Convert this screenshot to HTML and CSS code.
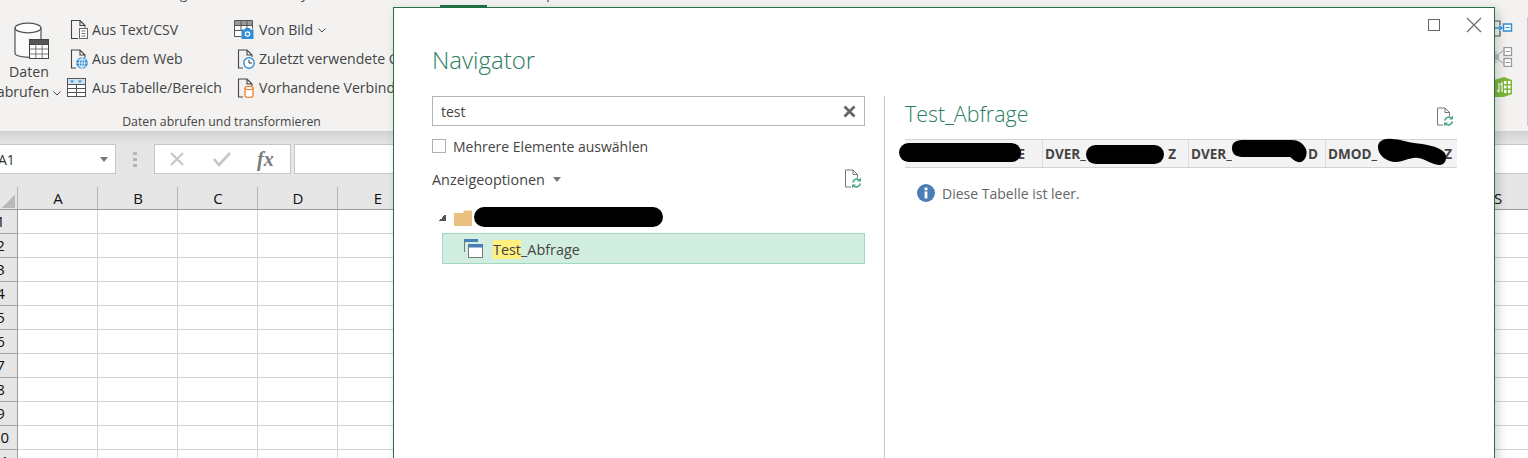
FILE: index.html
```html
<!DOCTYPE html>
<html lang="de">
<head>
<meta charset="utf-8">
<title>Navigator</title>
<link rel="stylesheet" href="styles.css">
</head>
<body>
<div class="app">
  <nav class="tabs">
    <span class="tab t-einf">Einfügen</span>
    <span class="tab t-seit">Seitenlayout</span>
    <span class="tab t-daten"></span>
    <span class="tab t-ueber">Überprüfen</span>
  </nav>
  <section class="ribbon">
    <div class="group">
      <div class="group-body">
        <div class="big-btn">
          <svg class="big-icon" width="36" height="38" viewBox="0 0 36 38"><path d="M1 6v25c0 3 6 4.500 14 4.500V17h12V6z" fill="#fbfbfb"/><ellipse cx="14" cy="6" rx="13" ry="4.800" fill="#fff" stroke="#555" stroke-width="1.200"/><path d="M1 6v25c0 2.300 4.500 3.900 14 4.300M27 6v11" fill="none" stroke="#555" stroke-width="1.200"/><rect x="15.500" y="17.500" width="19" height="19" fill="#fff" stroke="#444"/><rect x="15.500" y="17.500" width="19" height="5" fill="#555" stroke="#444"/><path d="M21.800 22v14M28.200 22v14M16 27h18M16 32h18" stroke="#777"/></svg>
          <span class="big-l1">Daten</span>
          <span class="big-l2">abrufen <svg class="chev" width="8" height="5" viewBox="0 0 8 5"><path d="M.5.500 4 4 7.500.500" fill="none" stroke="#444"/></svg></span>
        </div>
        <ul class="cmds cmds-a">
          <li><svg class="ico" width="20" height="20" viewBox="0 0 20 20"><path d="M9 18.500H2.500V.500H11l5 5v2M11 .500v5h5" fill="none" stroke="#444" stroke-width="1.100"/><rect x="10.500" y="8.500" width="8" height="10" fill="#fff" stroke="#666"/><path d="M12.500 11h4M12.500 13.500h4M12.500 16h4" stroke="#777"/></svg>Aus Text/CSV</li>
          <li><svg class="ico" width="20" height="20" viewBox="0 0 20 20"><path d="M7 19H2.500V1H11l5 5v2.500M11 1v5h5" fill="none" stroke="#444" stroke-width="1.100"/><circle cx="13" cy="14" r="5.800" fill="#2e8fd6"/><path d="M7.500 14h11M13 8.500v11M9 10.800h8M9 17.200h8M13 8.500c-3.500 3-3.500 8 0 11M13 8.500c3.500 3 3.500 8 0 11" fill="none" stroke="#fff" stroke-width=".8"/></svg>Aus dem Web</li>
          <li><svg class="ico ico-table" width="20" height="20" viewBox="0 0 20 20"><rect x=".500" y=".500" width="18" height="18" fill="#fff" stroke="#555"/><rect x="1" y="1" width="17" height="5" fill="#cfe3f2"/><path d="M3 2.500h4L5 5zM11 2.500h4L13 5z" fill="#2e8fd6"/><path d="M1 6.500h17M1 10.500h17M1 14.500h17M9.500 6.500v12" stroke="#555"/></svg>Aus Tabelle/Bereich</li>
        </ul>
        <ul class="cmds cmds-b">
          <li><svg class="ico ico-table" width="20" height="20" viewBox="0 0 20 20"><path d="M7.500 16.500H.5V.500h18v8" fill="#fff" stroke="#555"/><rect x="1" y="1" width="17" height="4" fill="#999"/><path d="M1 5.500h17M1 10.500h8M7 1v10M13 1v7" stroke="#555"/><rect x="7.500" y="9.500" width="12" height="9.500" fill="#2e8fd6"/><rect x="11" y="8" width="5" height="2" fill="#2e8fd6"/><circle cx="13.500" cy="14" r="2.800" fill="#fff"/><circle cx="13.500" cy="14" r="1.500" fill="#2e8fd6"/></svg>Von Bild <svg class="chev" width="8" height="5" viewBox="0 0 8 5"><path d="M.5.500 4 4 7.500.500" fill="none" stroke="#444"/></svg></li>
          <li><svg class="ico" width="20" height="20" viewBox="0 0 20 20"><path d="M7 19H2.500V1H11l5 5v2M11 1v5h5" fill="none" stroke="#444" stroke-width="1.100"/><circle cx="13" cy="14" r="5.200" fill="#fff" stroke="#2e8fd6" stroke-width="1.400"/><path d="M13 10.800V14h3" fill="none" stroke="#333"/></svg>Zuletzt verwendete Quellen</li>
          <li><svg class="ico" width="20" height="20" viewBox="0 0 20 20"><path d="M7 19H2.500V1H11l5 5v2M11 1v5h5" fill="none" stroke="#444" stroke-width="1.100"/><path d="M9 10v8c0 .800 2 1.300 4 1.300s4-.500 4-1.300v-8" fill="#fff" stroke="#e8802c" stroke-width="1.300"/><ellipse cx="13" cy="10" rx="4" ry="1.600" fill="#fff" stroke="#e8802c" stroke-width="1.300"/></svg>Vorhandene Verbindungen</li>
        </ul>
      </div>
      <div class="group-label">Daten abrufen und transformieren</div>
    </div>
    <div class="ribbon-right">
      <svg class="rel" width="20" height="17" viewBox="0 0 20 17"><path d="M0 1h7v4M7 11v5H0" fill="none" stroke="#555" stroke-width="1.200"/><path d="M0 8h8" stroke="#2e8fd6" stroke-width="1.400"/><path d="M6 5.500 9 8l-3 2.500" fill="none" stroke="#2e8fd6" stroke-width="1.200"/><rect x="10.500" y="4" width="8" height="7" fill="#fff" stroke="#2e8fd6" stroke-width="1.500"/><path d="M12.500 7.500h4" stroke="#2e8fd6"/></svg>
      <svg class="rel" width="20" height="20" viewBox="0 0 20 20"><path d="M0 5h4M0 15h4M4 8l6-4M4 12l6 4" stroke="#aaa" fill="none"/><rect x="0" y="7" width="6" height="6" fill="#bbb"/><rect x="11" y=".500" width="7.500" height="8" fill="#fff" stroke="#999" stroke-width="1.300"/><rect x="11" y="11.500" width="7.500" height="8" fill="#fff" stroke="#999" stroke-width="1.300"/><path d="M12.500 4.500h4.500M12.500 15.500h4.500" stroke="#999"/></svg>
      <svg class="rel" width="20" height="20" viewBox="0 0 20 20"><path d="M1 3l10-3 8 3v14l-8 3H1z" fill="#7cb83c"/><path d="M11 4h2.500v3H11zM15 4h2.500v3H15zM11 8.500h2.500v3H11zM15 8.500h2.500v3H15zM11 13h2.500v3H11zM15 13h2.500v3H15z" fill="#fff"/><path d="M6 6v9M4 13l2 2.500M7.500 8 9 6v9" stroke="#fff" fill="none" stroke-width="1.200"/></svg>
    </div>
    <div class="ribbon-end"></div>
  </section>
  <section class="formula-bar">
    <div class="name-box"><span>A1</span><i class="caret"></i></div>
    <div class="grip"><i></i><i></i><i></i></div>
    <div class="fx-box">
      <svg width="16" height="16" viewBox="0 0 16 16"><path d="M2 2l12 12M14 2 2 14" stroke="#c6c6c6" stroke-width="2"/></svg>
      <svg width="18" height="16" viewBox="0 0 18 16"><path d="M1 8l5 6L17 2" fill="none" stroke="#c6c6c6" stroke-width="2.600"/></svg>
      <span class="fx">fx</span>
    </div>
    <div class="formula-input"></div>
  </section>
  <section class="sheet">
    <div class="col-heads">
      <div class="corner"><i></i></div>
      <span>A</span><span>B</span><span>C</span><span>D</span><span>E</span><span></span><span></span><span></span><span></span><span></span><span></span><span></span><span></span><span></span><span></span><span></span><span></span><span></span><span>S</span>
    </div>
    <div class="row"><div class="row-head"><span>1</span></div><div class="cells"></div></div>
    <div class="row"><div class="row-head"><span>2</span></div><div class="cells"></div></div>
    <div class="row"><div class="row-head"><span>3</span></div><div class="cells"></div></div>
    <div class="row"><div class="row-head"><span>4</span></div><div class="cells"></div></div>
    <div class="row"><div class="row-head"><span>5</span></div><div class="cells"></div></div>
    <div class="row"><div class="row-head"><span>6</span></div><div class="cells"></div></div>
    <div class="row"><div class="row-head"><span>7</span></div><div class="cells"></div></div>
    <div class="row"><div class="row-head"><span>8</span></div><div class="cells"></div></div>
    <div class="row"><div class="row-head"><span>9</span></div><div class="cells"></div></div>
    <div class="row"><div class="row-head"><span>10</span></div><div class="cells"></div></div>
    <div class="row"><div class="row-head"><span>11</span></div><div class="cells"></div></div>
  </section>
</div>

<div class="dialog">
  <div class="win-btns">
    <svg width="14" height="14" viewBox="0 0 14 14"><rect x="1.500" y="1.500" width="11" height="11" fill="none" stroke="#666"/></svg>
    <svg width="16" height="16" viewBox="0 0 16 16"><path d="M1 1l14 14M15 1 1 15" stroke="#666" stroke-width="1.100"/></svg>
  </div>
  <h1 class="dlg-title">Navigator</h1>
  <div class="panes">
    <div class="pane-left">
      <div class="search"><span>test</span><svg width="13" height="13" viewBox="0 0 13 13"><path d="M1.500 1.500l10 10M11.500 1.500l-10 10" stroke="#666" stroke-width="2.800"/></svg></div>
      <label class="check-row"><i class="check"></i>Mehrere Elemente auswählen</label>
      <div class="options-row">
        <span class="options">Anzeigeoptionen<i class="caret caret-opt"></i></span>
        <svg class="refresh" width="18" height="20" viewBox="0 0 18 20"><path d="M7 18H1.500V1H9l4.500 4.500V9M9 1v4.500h4.500" fill="none" stroke="#777"/><path d="M8.800 13.500a4 4 0 0 1 7-2M16.300 14.500a4 4 0 0 1-7 2" fill="none" stroke="#4fa886" stroke-width="1.700"/><path d="M17 8.500v4h-4zM8 19.500v-4h4z" fill="#4fa886"/></svg>
      </div>
      <div class="tree-folder">
        <i class="tri"></i>
        <svg width="18" height="17" viewBox="0 0 18 17"><path d="M0 4h9l1-2 0 0V1h7l1 1v15H0z" fill="#e9c07f"/><path d="M10 3.500V1.500h7" fill="none" stroke="#f5e3c4"/></svg>
        <span class="redact"></span>
      </div>
      <div class="tree-item">
        <svg width="19" height="19" viewBox="0 0 19 19"><path d="M.5 13V.5h13" fill="none" stroke="#777"/><rect y="0" width="14" height="3" fill="#4a7fb5"/><rect x="4.500" y="5.500" width="14" height="13" fill="#fff" stroke="#777"/><rect x="4" y="5" width="15" height="3.500" fill="#4a7fb5"/></svg>
        <span class="item-text"><mark>Test</mark>_Abfrage</span>
      </div>
    </div>
    <div class="divider"></div>
    <div class="pane-right">
      <div class="preview-head">
        <h2>Test_Abfrage</h2>
        <svg class="refresh" width="18" height="20" viewBox="0 0 18 20"><path d="M7 18H1.500V1H9l4.500 4.500V9M9 1v4.500h4.500" fill="none" stroke="#777"/><path d="M8.800 13.500a4 4 0 0 1 7-2M16.300 14.500a4 4 0 0 1-7 2" fill="none" stroke="#4fa886" stroke-width="1.700"/><path d="M17 8.500v4h-4zM8 19.500v-4h4z" fill="#4fa886"/></svg>
      </div>
      <div class="table-head">
        <div class="th th1">E</div>
        <div class="th th2"><span>DVER_</span><span>Z</span></div>
        <div class="th th3"><span>DVER_</span><span>D</span></div>
        <div class="th th4"><span>DMOD_</span><span>Z</span></div>
        <svg class="scribble" width="562" height="32" viewBox="0 0 562 32"><rect x="0" y="5" width="122" height="19" rx="9.500"/><rect x="187" y="7" width="78" height="19" rx="9.500"/><path d="M333 10c0-7 6-8 12-8h48c6 0 11 3 14 9 2 5-1 12-5 13-5 1-8-3-11-5h-46c-7 0-12-2-12-9z"/><path d="M479 9c0-6 6-9 14-8 8 0 14 3 22 4 10 1 24 3 30 9 4 4 2 13-4 13-8 0-14-6-22-7-8-1-14 4-22 4-10 0-18-7-18-15z"/></svg>
      </div>
      <div class="empty-note">
        <svg width="18" height="18" viewBox="0 0 18 18"><circle cx="9" cy="9" r="9" fill="#4a7fb5"/><rect x="7.600" y="7.500" width="2.800" height="7" fill="#fff"/><rect x="7.600" y="3.500" width="2.800" height="2.800" fill="#fff"/></svg>
        <span>Diese Tabelle ist leer.</span>
      </div>
    </div>
  </div>
</div>
</body>
</html>
```
FILE: styles.css
```css
* { box-sizing: border-box; }
html, body { margin: 0; padding: 0; }
body {
  position: relative;
  width: 1528px;
  height: 458px;
  overflow: hidden;
  background: #fff;
  font-family: "Open Sans", "Noto Sans", sans-serif;
  font-size: 13.5px;
  color: #444;
}
svg { display: block; flex: none; }
i { display: block; font-style: normal; }
ul { list-style: none; margin: 0; padding: 0; }

.app { display: flex; flex-direction: column; width: 1528px; }

/* tab strip, only descenders peek in at the top */
.tabs { display: flex; height: 7px; background: #f3f2f1; overflow: hidden; }
.tab { display: block; height: 20px; line-height: 20px; margin-top: -16px; white-space: nowrap; flex: none; }
.t-einf { margin-left: 148px; width: 70px; }
.t-seit { margin-left: 33px; width: 189px; }
.t-daten { width: 47px; height: 23px; border-bottom: 2px solid #217346; }
.t-ueber { margin-left: 28px; }

.ribbon { display: flex; height: 124px; background: #f3f2f1; }
.group { display: flex; flex-direction: column; width: 445px; margin-left: -1px; flex: none; }
.group-body { display: flex; height: 106px; }
.group-label { font-size: 12.25px; text-align: center; line-height: 18px; }

.big-btn { width: 60px; flex: none; display: flex; flex-direction: column; align-items: center; padding-top: 15px; font-size: 14.2px; }
.big-icon { margin-left: 6px; }
.big-l1 { line-height: 20px; margin-top: 2px; }
.big-l2 { line-height: 20px; display: flex; align-items: center; gap: 4px; }
.chev { margin-top: 2px; }

.cmds { display: flex; flex-direction: column; padding-top: 8px; white-space: nowrap; font-size: 14.1px; }
.cmds li { display: flex; align-items: center; height: 29px; gap: 3px; }
.cmds-a { width: 167px; margin-left: 9px; }
.cmds-b { flex: none; }
.cmds-b li .chev { margin-left: 2px; }
.ico { margin-left: 1px; }
.ico-table { margin-left: -1px; margin-right: 2px; }

.ribbon-right { margin-left: auto; width: 34px; flex: none; display: flex; flex-direction: column; gap: 10px; padding-top: 13px; }
.ribbon-end { width: 1px; flex: none; margin: 10px 0 5px; background: #c8c8c8; }

.formula-bar {
  display: flex;
  height: 56px;
  padding-top: 13px;
  background: linear-gradient(#d2d2d2, #e6e6e6 13px);
  align-items: flex-start;
}
.name-box {
  display: flex; align-items: center; justify-content: space-between;
  width: 117px; height: 30px; margin-left: -1px;
  padding: 0 7px 0 0;
  background: #fff; border: 1px solid #c6c6c6;
  font-size: 14px; color: #333;
}
.name-box span { margin-left: -2px; }
.caret { width: 0; height: 0; border: 4px solid transparent; border-top: 5px solid #777; border-bottom: 0; }
.grip { display: flex; flex-direction: column; gap: 3px; width: 4px; height: 30px; margin: 0 0 0 17px; padding-top: 8px; }
.grip i { width: 4px; height: 3px; background: #b5b5b5; }
.fx-box {
  display: flex; align-items: center; gap: 28px;
  width: 137px; height: 30px; margin-left: 17px; padding-left: 14px;
  background: #fff; border: 1px solid #c6c6c6;
}
.fx { font-family: "Liberation Serif", serif; font-style: italic; font-size: 20px; color: #7a7a7a; font-weight: bold; margin-left: -2px; }
.formula-input { flex: 1; height: 30px; margin-left: 3px; background: #fff; border: 1px solid #c6c6c6; border-right: 0; }

.col-heads { display: flex; height: 23px; background: #e6e6e6; border-bottom: 1px solid #9c9c9c; }
.corner { width: 18px; flex: none; border-right: 1px solid #b4b4b4; overflow: hidden; }
.corner i { width: 14px; height: 14px; margin: 7px 0 0 1px; background: linear-gradient(135deg, transparent 50%, #b9b9b9 50%); }
.col-heads span {
  flex: none; width: 80px; text-align: center; font-size: 15px; line-height: 22px; color: #111;
  background: linear-gradient(#b4b4b4, #b4b4b4) right top / 1px 100% no-repeat;
}

.row { display: flex; height: 24px; }
.row-head {
  width: 18px; flex: none; overflow: hidden; background: #e6e6e6;
  border-bottom: 1px solid #a8a8a8; border-right: 1px solid #9c9c9c;
}
.row-head span { display: block; width: 33px; margin-left: -16px; text-align: center; font-size: 15px; line-height: 23px; color: #111; }
.cells {
  flex: 1;
  border-bottom: 1px solid #d4d4d4;
  background: repeating-linear-gradient(90deg, transparent 0 79px, #d4d4d4 79px 80px);
}

/* dialog window floating over the worksheet */
.dialog {
  position: absolute; left: 393px; top: 7px; width: 1102px; height: 470px;
  background: #fff; border: 1px solid #217346;
  box-shadow: 3px 3px 10px rgba(0,0,0,.18);
  display: flex; flex-direction: column;
}
.win-btns { position: absolute; right: 12px; top: 9px; display: flex; align-items: center; gap: 25px; }
.dlg-title { margin: 0; padding: 34px 0 0 38px; height: 88px; font-family: "Open Sans", sans-serif; font-weight: 300; font-size: 24px; line-height: 36px; color: #2a7d5f; }
.panes { display: flex; flex: 1; }
.pane-left { width: 433px; margin-left: 38px; flex: none; display: flex; flex-direction: column; }
.divider { width: 1px; margin-left: 19px; background: #c8c8c8; flex: none; }
.pane-right { width: 552px; margin-left: 20px; flex: none; display: flex; flex-direction: column; }

.search { display: flex; align-items: center; justify-content: space-between; height: 30px; padding: 0 8px; border: 1px solid #b4b4b4; font-size: 14px; }
.check-row { display: flex; align-items: center; gap: 7px; margin-top: 10px; height: 20px; font-size: 14px; }
.check { width: 14px; height: 14px; border: 1px solid #b0b0b0; }
.options-row { display: flex; align-items: center; justify-content: space-between; margin-top: 13px; height: 20px; font-size: 14.4px; padding-right: 3px; }
.options { display: flex; align-items: center; gap: 8px; }
.caret-opt { margin-top: 1px; }
.tree-folder { display: flex; align-items: center; margin-top: 16px; height: 24px; padding-left: 7px; }
.tri { width: 7px; height: 7px; background: linear-gradient(135deg, transparent 50%, #555 50%); margin-right: 8px; }
.redact { width: 189px; height: 20px; margin-left: 2px; border-radius: 10px; background: #000; }
.tree-item { display: flex; align-items: center; height: 31px; margin: 4px 0 0 10px; padding-left: 21px; gap: 10px; background: #d2eee0; border: 1px solid #a3d9bf; font-size: 14.4px; }
.item-text { padding-top: 1px; }
.item-text mark { background: #fff07f; color: inherit; }

.preview-head { display: flex; justify-content: space-between; height: 43px; padding-right: 3px; }
.preview-head h2 { margin: 0; font-family: "Open Sans", sans-serif; font-weight: 300; font-size: 21.4px; line-height: 36px; color: #2a7d5f; }
.preview-head .refresh { margin-top: 11px; }
.table-head { position: relative; display: flex; height: 29px; background: #f3f3f3; border-top: 1px solid #d4d4d4; border-bottom: 1px solid #d4d4d4; }
.th { display: flex; justify-content: space-between; align-items: center; padding: 0 3px 0 2px; font-weight: 700; font-size: 13.5px; color: #444; border-right: 1px solid #ddd; white-space: nowrap; }
.th1 { width: 138px; justify-content: flex-end; padding-right: 17px; }
.th2 { width: 146px; padding-right: 12px; }
.th3 { width: 137px; padding-right: 7px; }
.th4 { width: 131px; border-right: 0; padding-right: 5px; }
.scribble { position: absolute; left: -6px; top: -2px; fill: #000; }
.empty-note { display: flex; align-items: center; gap: 7px; margin: 15px 0 0 12px; height: 20px; font-size: 14px; color: #666; }
```
